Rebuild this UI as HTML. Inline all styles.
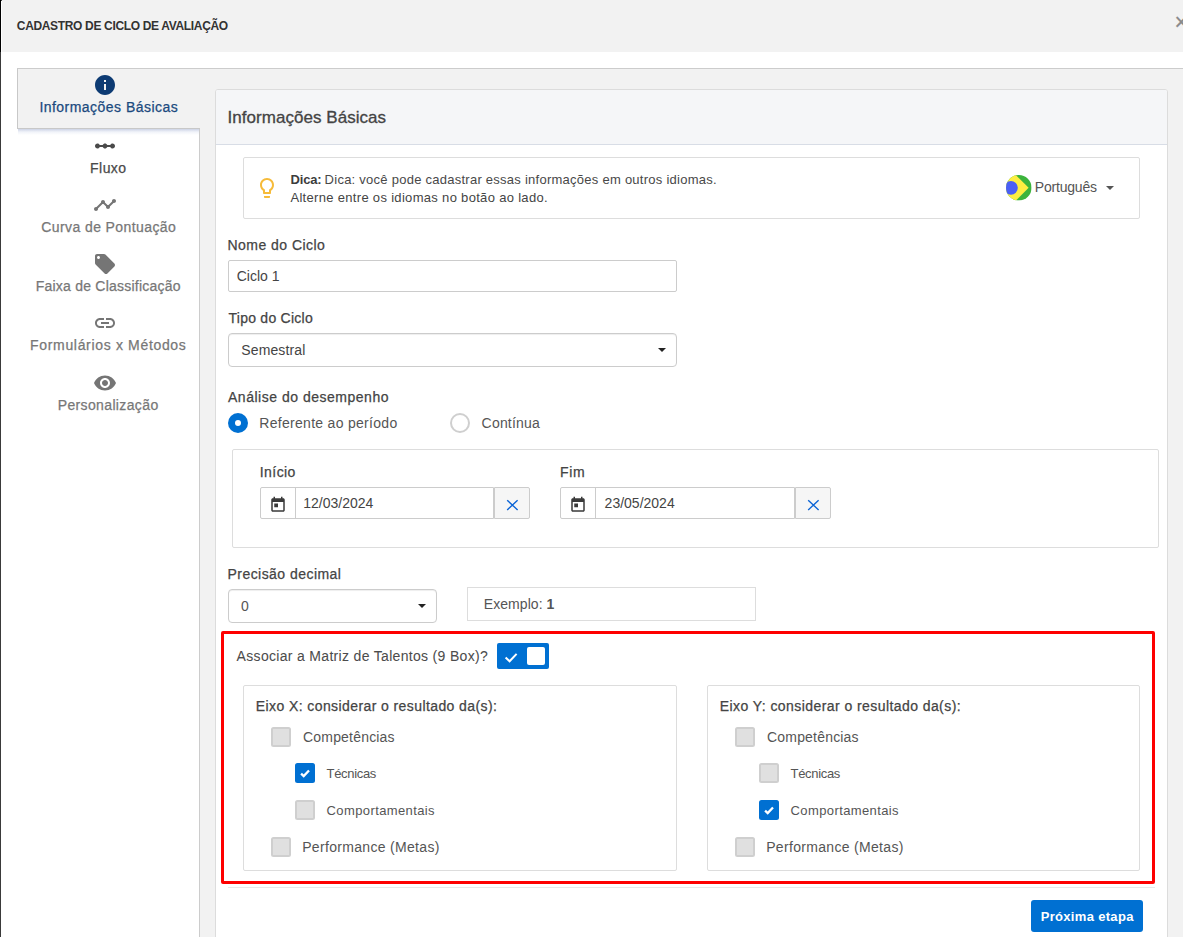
<!DOCTYPE html>
<html lang="pt-BR">
<head>
<meta charset="utf-8">
<title>Cadastro de Ciclo de Avaliação</title>
<style>
*{box-sizing:border-box;margin:0;padding:0}
html,body{width:1183px;height:937px;overflow:hidden;background:#fff}
body{font-family:"Liberation Sans",sans-serif;font-size:14px;color:#444;position:relative}
.a{position:absolute}
.t{position:absolute;white-space:nowrap;line-height:20px}
.t b{font-weight:700}
svg{position:absolute;overflow:visible}
.box{position:absolute;border:1px solid #ddd;background:#fff;border-radius:2px}
.inp{position:absolute;border:1px solid #ccc;background:#fff}
.sel{box-shadow:inset 0 1px 1px rgba(0,0,0,.07)}
.cb{position:absolute;width:20px;height:20px;border:2px solid #cfcfcf;background:#e0e0e0;border-radius:2.5px}
.cb.on{border:0;background:#0070d2}
.caret{position:absolute;width:0;height:0;border-left:4px solid transparent;border-right:4px solid transparent;border-top:4px solid #222}
</style>
</head>
<body>
<!-- modal header -->
<div class="a" style="left:2px;top:0;width:1181px;height:52px;background:#f2f2f2"></div>
<div class="a" style="left:0;top:0;width:1px;height:937px;background:#3a3a3a"></div>
<div class="a" style="left:0;top:0;width:1px;height:52px;background:#000"></div>
<div class="a" style="left:1px;top:0;width:1px;height:1px;background:#444"></div>
<!-- tab container -->
<div class="a" style="left:200px;top:69px;width:983px;height:868px;background:#f2f2f2"></div>
<div class="a" style="left:17px;top:68px;width:1166px;height:1px;background:#ccc"></div>
<div class="a" style="left:199px;top:129px;width:1px;height:808px;background:#ccc"></div>
<div class="a" style="left:17px;top:69px;width:183px;height:60px;background:#f2f2f2;border-left:1px solid #c8c8c8;border-bottom:1px solid #c8c8c8"></div>
<div class="a" style="left:18px;top:129px;width:181px;height:6px;background:linear-gradient(to bottom,rgba(196,204,226,.85),rgba(225,230,242,.45) 50%,rgba(255,255,255,0))"></div>
<!-- panel -->
<div class="a" style="left:215px;top:89px;width:953px;height:860px;background:#fff;border:1px solid #dcdcdc;border-radius:3px"></div>
<div class="a" style="left:216px;top:90px;width:951px;height:55px;background:#f5f6f8;border-bottom:1px solid #d8dde6;border-radius:2px 2px 0 0"></div>
<!-- tip -->
<div class="box" style="left:243px;top:157px;width:897px;height:62px"></div>
<!-- inputs -->
<div class="inp" style="left:228px;top:260px;width:449px;height:32px;border-radius:2px"></div>
<div class="inp sel" style="left:228px;top:333px;width:449px;height:34px;border-radius:4px"></div>
<div class="caret" style="left:658px;top:348px"></div>
<!-- radios -->
<div class="a" style="left:228px;top:413px;width:20px;height:20px;border-radius:50%;background:#0070d2"></div>
<div class="a" style="left:235px;top:420px;width:6px;height:6px;border-radius:50%;background:#fff"></div>
<div class="a" style="left:450px;top:413px;width:20px;height:20px;border-radius:50%;background:#fff;border:2px solid #cfcfcf"></div>
<!-- period box -->
<div class="box" style="left:232px;top:449px;width:927px;height:99px"></div>
<div class="inp" style="left:260px;top:487px;width:234px;height:32px;border-radius:2px 0 0 2px"></div>
<div class="a" style="left:295px;top:487px;width:1px;height:32px;background:#ccc"></div>
<div class="a" style="left:494px;top:487px;width:36px;height:32px;background:#f6f6f6;border:1px solid #ccc;border-radius:0 2px 2px 0"></div>
<svg style="left:269.3px;top:496.3px" width="18" height="18" viewBox="0 0 24 24"><path fill="#3a3a3a" d="M19 3h-1V1h-2v2H8V1H6v2H5c-1.11 0-1.99.9-1.99 2L3 19c0 1.1.89 2 2 2h14c1.1 0 2-.9 2-2V5c0-1.1-.9-2-2-2zm0 16H5V8h14v11zM7 10h5v5H7z"/></svg>
<svg style="left:502.5px;top:496px" width="18" height="18"><path d="M4.2 4.2L14.6 13.9M14.6 4.2L4.2 13.9" stroke="#0a63d6" stroke-width="1.4" fill="none"/></svg>
<div class="inp" style="left:560px;top:487px;width:235px;height:32px;border-radius:2px 0 0 2px"></div>
<div class="a" style="left:595px;top:487px;width:1px;height:32px;background:#ccc"></div>
<div class="a" style="left:795px;top:487px;width:36px;height:32px;background:#f6f6f6;border:1px solid #ccc;border-radius:0 2px 2px 0"></div>
<svg style="left:569.4px;top:496.3px" width="18" height="18" viewBox="0 0 24 24"><path fill="#3a3a3a" d="M19 3h-1V1h-2v2H8V1H6v2H5c-1.11 0-1.99.9-1.99 2L3 19c0 1.1.89 2 2 2h14c1.1 0 2-.9 2-2V5c0-1.1-.9-2-2-2zm0 16H5V8h14v11zM7 10h5v5H7z"/></svg>
<svg style="left:803.5px;top:496px" width="18" height="18"><path d="M4.2 4.2L14.6 13.9M14.6 4.2L4.2 13.9" stroke="#0a63d6" stroke-width="1.4" fill="none"/></svg>

<!-- precision -->
<div class="inp sel" style="left:228px;top:589px;width:209px;height:34px;border-radius:4px"></div>
<div class="caret" style="left:418px;top:604px"></div>
<div class="box" style="left:467px;top:587px;width:289px;height:34px;border-radius:0"></div>
<!-- red highlight -->
<div class="a" style="left:221px;top:631px;width:934px;height:253px;border:3px solid #fe0000;border-radius:2px"></div>
<div class="a" style="left:228px;top:887px;width:927px;height:1px;background:#e8e8e8"></div>
<!-- toggle -->
<div class="a" style="left:497px;top:643px;width:52px;height:26px;border-radius:2px;background:#0070d2"></div>
<div class="a" style="left:527px;top:647px;width:18px;height:18px;border-radius:2px;background:#fff"></div>
<svg style="left:497px;top:643px" width="52" height="26"><polyline points="8.6,14.5 12.6,18.3 19.6,10.9" fill="none" stroke="#fff" stroke-width="2"/></svg>
<!-- axis boxes -->
<div class="box" style="left:243px;top:685px;width:434px;height:186px"></div>
<div class="box" style="left:707px;top:685px;width:433px;height:186px"></div>
<div class="cb" style="left:271px;top:727px"></div>
<div class="cb on" style="left:295px;top:763px"></div>
<svg style="left:295px;top:763px" width="20" height="20"><polyline points="6.1,10.6 8.7,13.1 14,7.5" fill="none" stroke="#fff" stroke-width="2.3"/></svg>
<div class="cb" style="left:295px;top:800px"></div>
<div class="cb" style="left:271px;top:837px"></div>
<div class="cb" style="left:735px;top:727px"></div>
<div class="cb" style="left:759px;top:763px"></div>
<div class="cb on" style="left:759px;top:800px"></div>
<svg style="left:759px;top:800px" width="20" height="20"><polyline points="6.1,10.6 8.7,13.1 14,7.5" fill="none" stroke="#fff" stroke-width="2.3"/></svg>
<div class="cb" style="left:735px;top:837px"></div>

<!-- button -->
<div class="a" style="left:1031px;top:900px;width:112px;height:32px;border-radius:3px;background:#0070d2"></div>
<svg style="left:93px;top:73px" width="24" height="24" viewBox="0 0 24 24"><path fill="#0d3b73" d="M12 2C6.48 2 2 6.48 2 12s4.48 10 10 10 10-4.48 10-10S17.52 2 12 2zm1 15h-2v-6h2v6zm0-8h-2V7h2v2z"/></svg>
<svg style="left:92.5px;top:134.1px" width="24" height="24" viewBox="0 0 24 24"><path fill="#4a4a4a" d="M19.5 9.5c-1.03 0-1.9.62-2.29 1.5h-2.92c-.39-.88-1.26-1.5-2.29-1.5s-1.9.62-2.29 1.5H6.79c-.39-.88-1.26-1.5-2.29-1.5C3.12 9.5 2 10.62 2 12s1.12 2.5 2.5 2.5c1.03 0 1.9-.62 2.29-1.5h2.92c.39.88 1.26 1.5 2.29 1.5s1.9-.62 2.29-1.5h2.92c.39.88 1.26 1.5 2.29 1.5 1.38 0 2.5-1.12 2.5-2.5s-1.12-2.5-2.5-2.5z"/></svg>
<svg style="left:92.85px;top:193px" width="24" height="24" viewBox="0 0 24 24"><path fill="#757575" d="M23 8c0 1.1-.9 2-2 2-.18 0-.35-.02-.51-.07l-3.56 3.55c.05.16.07.34.07.52 0 1.1-.9 2-2 2s-2-.9-2-2c0-.18.02-.36.07-.52l-2.55-2.55c-.16.05-.34.07-.52.07s-.36-.02-.52-.07l-4.55 4.56c.05.16.07.33.07.51 0 1.1-.9 2-2 2s-2-.9-2-2 .9-2 2-2c.18 0 .35.02.51.07l4.56-4.55C8.02 9.36 8 9.18 8 9c0-1.1.9-2 2-2s2 .9 2 2c0 .18-.02.36-.07.52l2.55 2.55c.16-.05.34-.07.52-.07s.36.02.52.07l3.55-3.56C19.02 8.35 19 8.18 19 8c0-1.1.9-2 2-2s2 .9 2 2z"/></svg>
<svg style="left:92.8px;top:251.9px" width="24" height="24" viewBox="0 0 24 24"><path fill="#757575" d="M21.41 11.58l-9-9C12.05 2.22 11.55 2 11 2H4c-1.1 0-2 .9-2 2v7c0 .55.22 1.05.59 1.42l9 9c.36.36.86.58 1.41.58.55 0 1.05-.22 1.41-.59l7-7c.37-.36.59-.86.59-1.41 0-.55-.23-1.06-.59-1.42zM5.5 7C4.67 7 4 6.33 4 5.5S4.67 4 5.5 4 7 4.67 7 5.5 6.33 7 5.5 7z"/></svg>
<svg style="left:92.85px;top:310.8px" width="24" height="24" viewBox="0 0 24 24"><path fill="#757575" d="M3.9 12c0-1.71 1.39-3.1 3.1-3.1h4V7H7c-2.76 0-5 2.24-5 5s2.24 5 5 5h4v-1.9H7c-1.71 0-3.1-1.39-3.1-3.1zM8 13h8v-2H8v2zm9-6h-4v1.9h4c1.71 0 3.1 1.39 3.1 3.1s-1.39 3.1-3.1 3.1h-4V17h4c2.76 0 5-2.24 5-5s-2.24-5-5-5z"/></svg>
<svg style="left:92.85px;top:370.8px" width="24" height="24" viewBox="0 0 24 24"><path fill="#757575" d="M12 4.5C7 4.5 2.73 7.61 1 12c1.73 4.39 6 7.5 11 7.5s9.27-3.11 11-7.5c-1.73-4.39-6-7.5-11-7.5zM12 17c-2.76 0-5-2.24-5-5s2.24-5 5-5 5 2.24 5 5-2.24 5-5 5zm0-8c-1.66 0-3 1.34-3 3s1.34 3 3 3 3-1.34 3-3-1.34-3-3-3z"/></svg>
<svg style="left:255px;top:176.1px" width="24" height="24" viewBox="0 0 24 24"><path fill="#f6bb3a" d="M9 21c0 .55.45 1 1 1h4c.55 0 1-.45 1-1v-1H9v1zm3-19C8.14 2 5 5.14 5 9c0 2.38 1.19 4.47 3 5.74V17c0 .55.45 1 1 1h6c.55 0 1-.45 1-1v-2.26c1.81-1.27 3-3.36 3-5.74 0-3.86-3.14-7-7-7zm2.850 11.100l-.85.6V16h-4v-2.300l-.85-.6C7.8 12.160 7 10.630 7 9c0-2.760 2.240-5 5-5s5 2.240 5 5c0 1.630-.8 3.160-2.150 4.100z"/></svg>
<svg style="left:1006.1px;top:175px" width="25.6" height="25.6" viewBox="0 0 26 26"><defs><clipPath id="fc"><circle cx="13" cy="13" r="13"/></clipPath></defs><g clip-path="url(#fc)"><rect width="26" height="26" fill="#3cb43c"/><polygon points="-13,13 5,-5 23,13 5,31" fill="#fdee42"/><circle cx="5" cy="13" r="7" fill="#4a5ff5"/></g></svg>
<div class="caret" style="left:1106px;top:186px;border-top-color:#555;border-top-width:4.5px"></div>
<div class="t" style="left:1174.4px;top:12px;font-size:23px;color:#8a8a8a;-webkit-text-stroke:.25px #8a8a8a">×</div>

<div class="t" style="left:16.80px;top:16.00px;font-size:12px;color:#333;letter-spacing:-0.335px;font-weight:700">CADASTRO DE CICLO DE AVALIAÇÃO</div>
<div class="t" style="left:39.40px;top:97.00px;font-size:14px;color:#1b4a7e;letter-spacing:0.464px;-webkit-text-stroke:0.25px #1b4a7e">Informações Básicas</div>
<div class="t" style="left:90.10px;top:158.00px;font-size:14px;color:#4a4a4a;letter-spacing:0.438px;-webkit-text-stroke:0.25px #4a4a4a">Fluxo</div>
<div class="t" style="left:41.30px;top:217.00px;font-size:14px;color:#777;letter-spacing:0.403px;-webkit-text-stroke:0.25px #777">Curva de Pontuação</div>
<div class="t" style="left:35.70px;top:276.00px;font-size:14px;color:#777;letter-spacing:0.230px;-webkit-text-stroke:0.25px #777">Faixa de Classificação</div>
<div class="t" style="left:30.10px;top:335.00px;font-size:14px;color:#777;letter-spacing:0.666px;-webkit-text-stroke:0.25px #777">Formulários x Métodos</div>
<div class="t" style="left:57.70px;top:395.00px;font-size:14px;color:#777;letter-spacing:0.366px;-webkit-text-stroke:0.25px #777">Personalização</div>
<div class="t" style="left:227.60px;top:107.50px;font-size:17px;color:#444;letter-spacing:0.034px;-webkit-text-stroke:0.3px #444">Informações Básicas</div>
<div class="t" style="left:290.60px;top:169.50px;font-size:13px;color:#3c3c3c;letter-spacing:-0.215px;font-weight:700">Dica:</div>
<div class="t" style="left:324.60px;top:169.50px;font-size:13px;color:#484848;letter-spacing:0.255px">Dica: você pode cadastrar essas informações em outros idiomas.</div>
<div class="t" style="left:290.40px;top:187.50px;font-size:13px;color:#444;letter-spacing:0.316px">Alterne entre os idiomas no botão ao lado.</div>
<div class="t" style="left:1034.80px;top:177.00px;font-size:14px;color:#555;letter-spacing:-0.203px">Português</div>
<div class="t" style="left:227.50px;top:235.00px;font-size:14px;color:#444;letter-spacing:0.464px;-webkit-text-stroke:0.25px #444">Nome do Ciclo</div>
<div class="t" style="left:228.50px;top:308.00px;font-size:14px;color:#444;letter-spacing:0.250px;-webkit-text-stroke:0.25px #444">Tipo do Ciclo</div>
<div class="t" style="left:228.00px;top:387.00px;font-size:14px;color:#444;letter-spacing:0.513px;-webkit-text-stroke:0.25px #444">Análise do desempenho</div>
<div class="t" style="left:259.80px;top:462.00px;font-size:14px;color:#444;letter-spacing:0.425px;-webkit-text-stroke:0.25px #444">Início</div>
<div class="t" style="left:560.10px;top:462.00px;font-size:14px;color:#444;letter-spacing:0.669px;-webkit-text-stroke:0.25px #444">Fim</div>
<div class="t" style="left:227.50px;top:564.00px;font-size:14px;color:#444;letter-spacing:0.454px;-webkit-text-stroke:0.25px #444">Precisão decimal</div>
<div class="t" style="left:255.80px;top:696.00px;font-size:14px;color:#444;letter-spacing:0.407px;-webkit-text-stroke:0.25px #444">Eixo X: considerar o resultado da(s):</div>
<div class="t" style="left:719.80px;top:696.00px;font-size:14px;color:#444;letter-spacing:0.428px;-webkit-text-stroke:0.25px #444">Eixo Y: considerar o resultado da(s):</div>
<div class="t" style="left:236.70px;top:266.00px;font-size:14px;color:#444">Ciclo 1</div>
<div class="t" style="left:241.30px;top:340.00px;font-size:14px;color:#444;letter-spacing:0.124px">Semestral</div>
<div class="t" style="left:259.30px;top:413.00px;font-size:14px;color:#555;letter-spacing:0.293px">Referente ao período</div>
<div class="t" style="left:481.60px;top:413.00px;font-size:14px;color:#555;letter-spacing:0.195px">Contínua</div>
<div class="t" style="left:303.30px;top:493.00px;font-size:14px;color:#444">12/03/2024</div>
<div class="t" style="left:604.60px;top:493.00px;font-size:14px;color:#444">23/05/2024</div>
<div class="t" style="left:241.10px;top:596.00px;font-size:14px;color:#555">0</div>
<div class="t" style="left:483.80px;top:594.00px;font-size:14px;color:#555;letter-spacing:0.061px">Exemplo: <b>1</b></div>
<div class="t" style="left:236.60px;top:646.00px;font-size:14px;color:#4c4c4c;letter-spacing:0.317px;-webkit-text-stroke:0.05px #4c4c4c">Associar a Matriz de Talentos (9 Box)?</div>
<div class="t" style="left:303.00px;top:727.00px;font-size:14px;color:#555;letter-spacing:0.192px">Competências</div>
<div class="t" style="left:326.60px;top:763.50px;font-size:13px;color:#555;letter-spacing:-0.331px">Técnicas</div>
<div class="t" style="left:326.60px;top:800.50px;font-size:13px;color:#555;letter-spacing:0.386px">Comportamentais</div>
<div class="t" style="left:302.20px;top:837.00px;font-size:14px;color:#555;letter-spacing:0.316px">Performance (Metas)</div>
<div class="t" style="left:767.00px;top:727.00px;font-size:14px;color:#555;letter-spacing:0.192px">Competências</div>
<div class="t" style="left:790.60px;top:763.50px;font-size:13px;color:#555;letter-spacing:-0.331px">Técnicas</div>
<div class="t" style="left:790.60px;top:800.50px;font-size:13px;color:#555;letter-spacing:0.386px">Comportamentais</div>
<div class="t" style="left:766.20px;top:837.00px;font-size:14px;color:#555;letter-spacing:0.316px">Performance (Metas)</div>
<div class="t" style="left:1040.70px;top:906.50px;font-size:13px;color:#fff;letter-spacing:0.321px;font-weight:700">Próxima etapa</div>
</body>
</html>
